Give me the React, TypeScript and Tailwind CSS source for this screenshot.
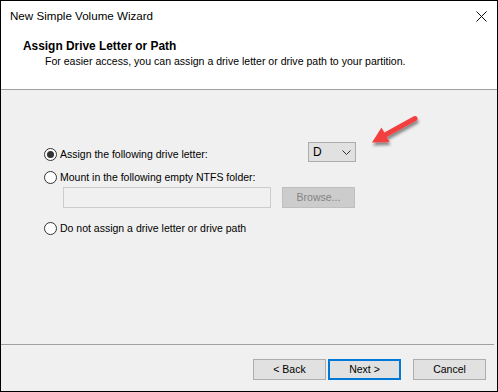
import React from "react";

const font = { fontFamily: '"Liberation Sans", Arial, sans-serif' };

function Radio({ checked }: { checked?: boolean }) {
  return (
    <span className="flex h-[13px] w-[13px] shrink-0 items-center justify-center rounded-full border border-[#333333] bg-white">
      {checked && <span className="h-[7px] w-[7px] rounded-full bg-[#333333]" />}
    </span>
  );
}

function Button({ label, primary }: { label: string; primary?: boolean }) {
  return (
    <div
      className={
        "flex h-[21px] w-[73px] items-center justify-center bg-[#e1e1e1] text-[10.5px] text-black " +
        (primary ? "border-2 border-[#0078d7]" : "border border-[#adadad]")
      }
    >
      {label}
    </div>
  );
}

export default function App() {
  return (
    <div
      style={font}
      className="relative flex h-[392px] w-[498px] flex-col border border-black bg-[#f0f0f0] text-black"
    >
      {/* title bar */}
      <div className="flex h-[29px] shrink-0 items-center justify-between bg-white pl-[9px] pr-[10px]">
        <span className="text-[11.6px]">New Simple Volume Wizard</span>
        <svg width="11" height="11" viewBox="0 0 11 11" className="mt-[1px]">
          <path d="M0.5 0.5 L10.5 10.5 M10.5 0.5 L0.5 10.5" stroke="#111" strokeWidth="1" />
        </svg>
      </div>

      {/* header */}
      <div className="h-[59px] shrink-0 bg-white pl-[22px] pt-[9px] leading-[15px]">
        <div className="text-[11.9px] font-bold">Assign Drive Letter or Path</div>
        <div className="pl-[22px] text-[10.55px]">
          For easier access, you can assign a drive letter or drive path to your partition.
        </div>
      </div>
      <div className="h-px shrink-0 bg-[#a0a0a0]" />

      {/* body */}
      <div className="flex h-[254px] shrink-0 flex-col pl-[43px] pt-[52px] text-[10.5px] leading-[15px]">
        <div className="flex items-start">
          <div className="mt-[5px] flex w-[264px] items-center gap-[3px]">
            <Radio checked />
            <span>Assign the following drive letter:</span>
          </div>
          <div className="flex h-[20px] w-[48px] items-center justify-between border border-[#acacac] bg-[#e1e1e1] pl-[4px] pr-[4px]">
            <span className="text-[12px]">D</span>
            <svg width="9" height="5" viewBox="0 0 9 5">
              <path d="M0.5 0.5 L4.5 4.5 L8.5 0.5" fill="none" stroke="#333" strokeWidth="1" />
            </svg>
          </div>
        </div>

        <div className="mt-[8px] flex items-center gap-[3px]">
          <Radio />
          <span>Mount in the following empty NTFS folder:</span>
        </div>

        <div className="mt-[2px] flex items-center gap-[11px] pl-[19px]">
          <div className="h-[21px] w-[208px] border border-[#cccccc] bg-[#f0f0f0]" />
          <div className="flex h-[21px] w-[73px] items-center justify-center border border-[#bfbfbf] bg-[#cccccc] text-[#838383]">
            Browse...
          </div>
        </div>

        <div className="mt-[13px] flex items-center gap-[3px]">
          <Radio />
          <span>Do not assign a drive letter or drive path</span>
        </div>
      </div>
      <div className="mr-[3px] h-px shrink-0 bg-[#a0a0a0]" />

      {/* footer */}
      <div className="flex flex-1 items-start justify-end pr-[11px] pt-[14px]">
        <Button label="< Back" />
        <div className="ml-[2px]">
          <Button label="Next >" primary />
        </div>
        <div className="ml-[12px]">
          <Button label="Cancel" />
        </div>
      </div>

      {/* red annotation arrow */}
      <svg
        className="absolute left-[360px] top-[105px]"
        width="65"
        height="50"
        viewBox="0 0 65 50"
      >
        <defs>
          <filter id="sh" x="-30%" y="-30%" width="160%" height="180%">
            <feDropShadow dx="1" dy="3" stdDeviation="1.6" floodColor="#000" floodOpacity="0.45" />
          </filter>
        </defs>
        <g filter="url(#sh)">
          <path d="M54 12.5 L25 28.5" stroke="#f24141" strokeWidth="5" strokeLinecap="round" />
          <path d="M11 36.5 L20.5 21.5 L28.5 36 Z" fill="#f24141" />
        </g>
      </svg>
    </div>
  );
}
